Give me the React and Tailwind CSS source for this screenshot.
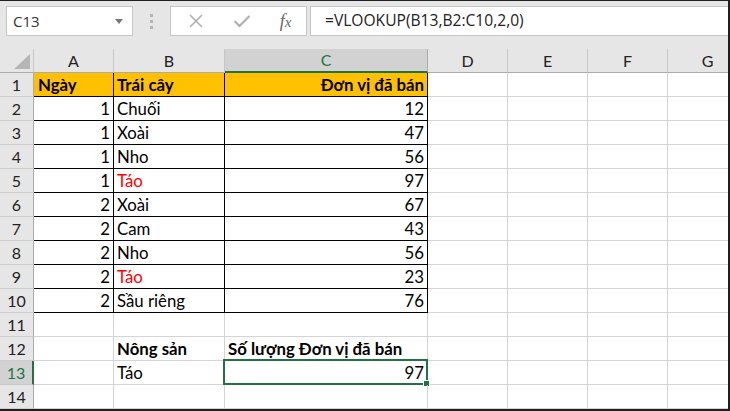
import React from "react";

const cols = ["A", "B", "C", "D", "E", "F", "G"];

const rows = [
  { a: "Ngày", b: "Trái cây", c: "Đơn vị đã bán", head: true },
  { a: "1", b: "Chuối", c: "12" },
  { a: "1", b: "Xoài", c: "47" },
  { a: "1", b: "Nho", c: "56" },
  { a: "1", b: "Táo", c: "97", red: true },
  { a: "2", b: "Xoài", c: "67" },
  { a: "2", b: "Cam", c: "43" },
  { a: "2", b: "Nho", c: "56" },
  { a: "2", b: "Táo", c: "23", red: true },
  { a: "2", b: "Sầu riêng", c: "76" },
  {},
  { b: "Nông sản", c: "Số lượng Đơn vị đã bán", bold: true, left: true },
  { b: "Táo", c: "97" },
  {},
];

const FormulaBar = () => (
  <div className="h-[48px] bg-[#e6e6e6] flex items-start pt-[5px] font-['Open_Sans',sans-serif]">
    {/* name box */}
    <div className="ml-[6px] w-[127px] h-[30px] bg-white border border-[#c6c6c6] flex items-center justify-between pl-[6px] pr-[9px]">
      <span className="text-[15px] text-[#333] leading-none">C13</span>
      <svg width="8" height="5" viewBox="0 0 8 5">
        <polygon points="0,0 8,0 4,5" fill="#777" />
      </svg>
    </div>
    {/* grip dots */}
    <div className="w-[37px] h-[30px] flex flex-col items-center justify-center gap-[3px]">
      <div className="w-[3px] h-[3px] bg-[#b4b4b4]" />
      <div className="w-[3px] h-[3px] bg-[#b4b4b4]" />
      <div className="w-[3px] h-[3px] bg-[#b4b4b4]" />
    </div>
    {/* cancel / enter / fx */}
    <div className="w-[137px] h-[30px] bg-white border border-[#c6c6c6] flex items-center">
      <div className="w-[46px] flex justify-center pl-[4px]">
        <svg width="16" height="16" viewBox="0 0 16 16">
          <path d="M2 2 L14 14 M14 2 L2 14" stroke="#b0b0b0" strokeWidth="1.6" fill="none" />
        </svg>
      </div>
      <div className="w-[46px] flex justify-center pl-[4px]">
        <svg width="18" height="14" viewBox="0 0 18 14">
          <path d="M1.5 7 L6.5 12 L16.5 2" stroke="#b0b0b0" strokeWidth="2.2" fill="none" />
        </svg>
      </div>
      <div className="flex-1 flex justify-center pl-[2px]">
        <span className="font-['Liberation_Serif',serif] italic text-[18px] text-[#666] leading-none">
          f<span className="text-[15px]">x</span>
        </span>
      </div>
    </div>
    {/* formula input */}
    <div className="ml-[3px] flex-1 h-[30px] bg-white border border-r-0 border-[#c6c6c6] flex items-center pl-[14px]">
      <span className="text-[15.6px] text-[#222] leading-none">=VLOOKUP(B13,B2:C10,2,0)</span>
    </div>
  </div>
);

const ColHeaders = () => (
  <>
    <div className="h-[24px] bg-[#e6e6e6] border-r border-b border-r-[#c6c6c6] border-b-[#ababab] flex items-end justify-end pr-[3px] pb-[3px]">
      <svg width="16" height="15" viewBox="0 0 16 15">
        <polygon points="16,0 16,15 0,15" fill="#b6b6b6" />
      </svg>
    </div>
    {cols.map((c) =>
      c === "C" ? (
        <div
          key={c}
          className="h-[24px] bg-[#d2d2d2] border-r border-r-[#ababab] border-b-2 border-b-[#217346] flex items-center justify-center text-[16px] text-[#217346]"
        >
          {c}
        </div>
      ) : (
        <div
          key={c}
          className="h-[24px] bg-[#e6e6e6] border-r border-b border-r-[#c6c6c6] border-b-[#ababab] flex items-center justify-center text-[16px] text-[#222]"
        >
          {c}
        </div>
      )
    )}
  </>
);

const Cell = ({ children, boxed, className = "" }) => (
  <div
    className={`h-[24px] border-r border-b flex items-center px-[3px] whitespace-nowrap overflow-visible ${
      boxed ? "border-black" : "border-[#d4d4d4]"
    } ${className}`}
  >
    {children}
  </div>
);

export default function App() {
  return (
    <div className="w-[730px] h-[411px] overflow-hidden bg-white border-t border-r-2 border-b-2 border-[#1f1f1f] font-['Lato',sans-serif]">
      <FormulaBar />
      <div className="grid grid-cols-[34px_80px_111px_203px_80px_80px_80px_80px] w-[748px]">
        <ColHeaders />
        {rows.map((r, i) => {
          const n = i + 1;
          const boxed = n <= 10;
          const sel = n === 13;
          const bg = r.head ? "bg-[#ffc000] font-bold" : "";
          return (
            <React.Fragment key={n}>
              {sel ? (
                <div className="h-[24px] bg-[#d2d2d2] border-r-2 border-r-[#217346] border-b border-b-[#c8c8c8] flex items-center justify-center text-[16px] text-[#217346]">
                  {n}
                </div>
              ) : (
                <div className="h-[24px] bg-[#e6e6e6] border-r border-b border-r-[#ababab] border-b-[#cdcdcd] flex items-center justify-center text-[16px] text-[#222]">
                  {n}
                </div>
              )}
              <Cell boxed={boxed} className={`${bg} ${r.head ? "justify-start pl-[4px]" : "justify-end"} text-[16.8px] text-black`}>
                {r.a}
              </Cell>
              <Cell
                boxed={boxed}
                className={`${bg} ${r.bold ? "font-bold" : ""} justify-start text-[16.8px] ${r.red ? "text-[#ff0000]" : "text-black"}`}
              >
                {r.b}
              </Cell>
              <Cell
                boxed={boxed}
                className={`${bg} ${r.bold ? "font-bold" : ""} ${r.left ? "justify-start" : "justify-end"} text-[16.8px] text-black relative`}
              >
                {r.c}
                {sel && (
                  <div className="absolute -left-[2px] -top-[2px] -right-[1px] -bottom-[1px] border-2 border-[#217346]">
                    <div className="absolute -right-[4px] -bottom-[4px] w-[7px] h-[7px] bg-[#217346] border border-white" />
                  </div>
                )}
              </Cell>
              <Cell />
              <Cell />
              <Cell />
              <Cell />
            </React.Fragment>
          );
        })}
      </div>
    </div>
  );
}
